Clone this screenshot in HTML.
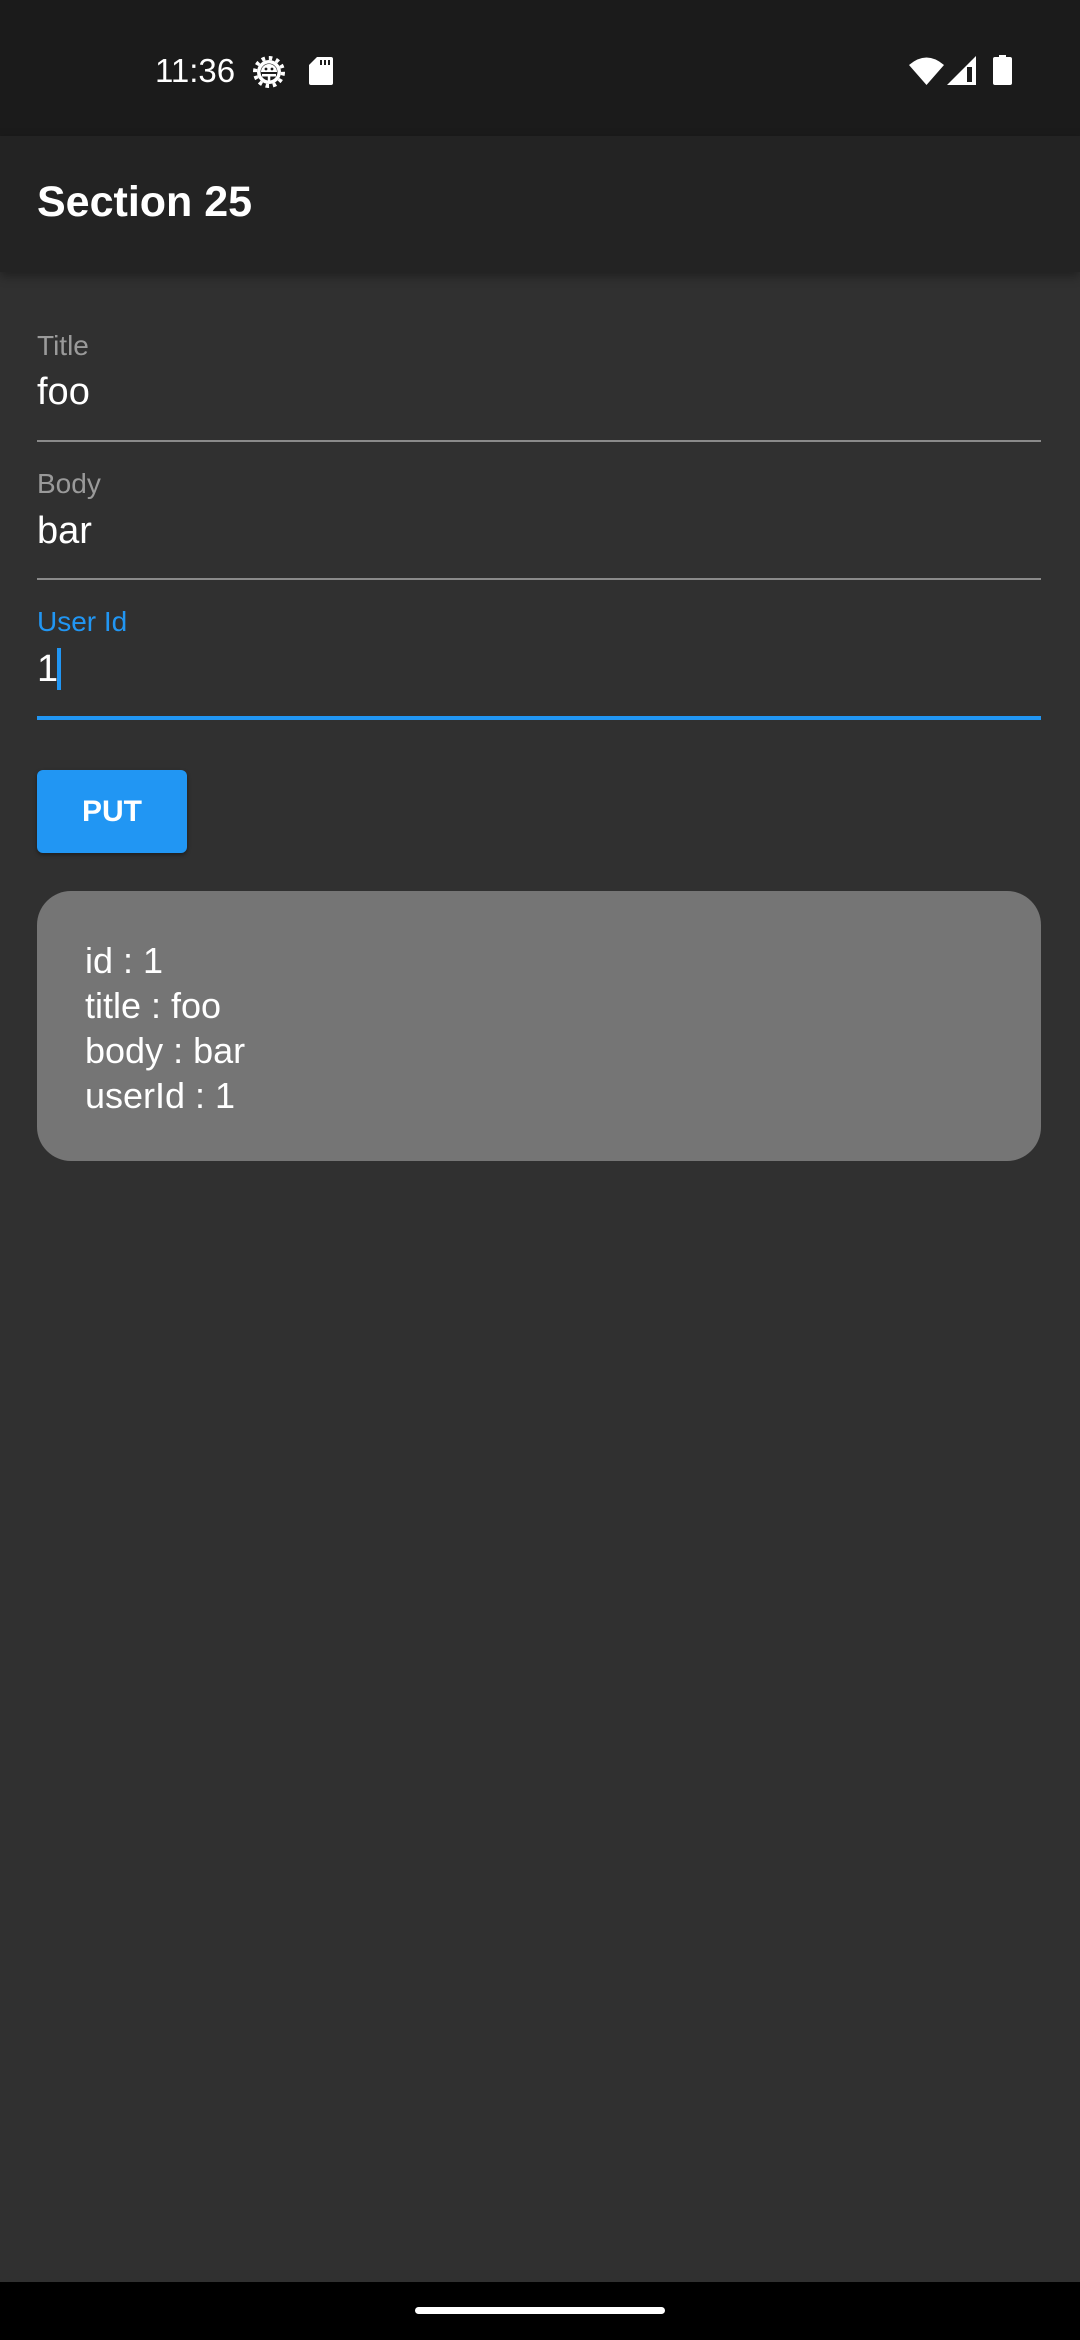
<!DOCTYPE html>
<html><head><meta charset="utf-8"><style>
*{margin:0;padding:0;box-sizing:border-box}
body{width:1080px;height:2340px;background:#303030;font-family:"Liberation Sans",Roboto,sans-serif;position:relative;overflow:hidden;color:#fff}
.abs{position:absolute}
.sb{left:0;top:0;width:1080px;height:136px;background:#1b1b1b}
.ab{left:0;top:136px;width:1080px;height:136px;background:#232323;box-shadow:0 4px 10px rgba(0,0,0,.35)}
.lbl{font-size:28px;color:#9a9a9a;left:37px;line-height:1}
.val{font-size:38px;color:#fff;left:37px;line-height:1}
.line{left:37px;width:1004px;height:2px;background:#8a8a8a}
</style></head><body>
<div class="abs sb"></div>
<div class="abs" style="left:155px;top:54px;font-size:33px;line-height:1;color:#fff">11:36</div>
<svg class="abs" style="left:252px;top:56px" width="34" height="32" viewBox="0 0 34 32">
<circle cx="17" cy="16" r="14" fill="none" stroke="#fff" stroke-width="4" stroke-dasharray="3.5 3.8"/>
<circle cx="17" cy="16" r="12" fill="#fff"/>
<circle cx="17" cy="16" r="8.5" fill="#1b1b1b"/>
<path d="M9 16A8 8 0 0 1 25 16z" fill="#fff"/>
<rect x="10" y="18" width="14" height="2.5" fill="#fff"/>
<rect x="15.8" y="18" width="2.5" height="7" fill="#fff"/>
<circle cx="14" cy="13" r="1.4" fill="#1b1b1b"/><circle cx="20" cy="13" r="1.4" fill="#1b1b1b"/>
</svg>
<svg class="abs" style="left:309px;top:57px" width="24" height="28" viewBox="0 0 24 28">
<path d="M8 0H22a2 2 0 0 1 2 2V26a2 2 0 0 1-2 2H2a2 2 0 0 1-2-2V8z" fill="#fff"/>
<rect x="11" y="3" width="2" height="5" fill="#1b1b1b"/><rect x="15" y="3" width="2" height="5" fill="#1b1b1b"/><rect x="19" y="3" width="2" height="5" fill="#1b1b1b"/>
</svg>
<svg class="abs" style="left:909px;top:56px" width="35" height="29" viewBox="0 0 35 29">
<path d="M0 9Q17.5 -6 35 9L17.5 29z" fill="#fff"/>
</svg>
<svg class="abs" style="left:947px;top:56px" width="30" height="29" viewBox="0 0 30 29">
<path d="M29 0V29H0z" fill="#fff"/><rect x="20" y="11" width="5" height="15" fill="#1b1b1b"/>
</svg>
<svg class="abs" style="left:993px;top:55px" width="19" height="30" viewBox="0 0 19 30">
<rect x="6" y="0" width="7" height="3" fill="#fff"/><rect x="0" y="2" width="19" height="28" rx="2" fill="#fff"/>
</svg>
<div class="abs ab"></div>
<div class="abs" style="left:37px;top:181px;font-size:43px;line-height:1;font-weight:bold">Section 25</div>

<div class="abs lbl" style="top:332px">Title</div>
<div class="abs val" style="top:373px">foo</div>
<div class="abs line" style="top:440px"></div>
<div class="abs lbl" style="top:470px">Body</div>
<div class="abs val" style="top:512px">bar</div>
<div class="abs line" style="top:578px"></div>
<div class="abs lbl" style="top:608px;color:#2196f3">User Id</div>
<div class="abs val" style="top:650px">1</div>
<div class="abs" style="left:57px;top:648px;width:4px;height:42px;background:#2196f3"></div>
<div class="abs" style="left:37px;top:716px;width:1004px;height:4px;background:#2196f3"></div>

<div class="abs" style="left:37px;top:770px;width:150px;height:83px;background:#2196f3;border-radius:6px;box-shadow:0 2px 4px rgba(0,0,0,.4);font-size:30px;font-weight:bold;text-align:center;line-height:83px">PUT</div>

<div class="abs" style="left:37px;top:891px;width:1004px;height:270px;background:#757575;border-radius:34px"></div>
<div class="abs" style="left:85px;top:938px;font-size:36px;line-height:45px">id : 1<br>title : foo<br>body : bar<br>userId : 1</div>

<div class="abs" style="left:0;top:2282px;width:1080px;height:58px;background:#000"></div>
<div class="abs" style="left:415px;top:2307px;width:250px;height:7px;border-radius:4px;background:#fff"></div>
</body></html>
